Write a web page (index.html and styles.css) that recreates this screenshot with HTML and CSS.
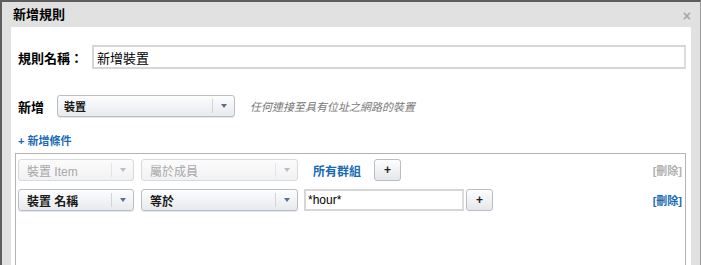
FILE: index.html
```html
<!DOCTYPE html>
<html>
<head>
<meta charset="utf-8">
<link rel="stylesheet" href="styles.css">
</head>
<body>
<div class="dialog">
  <div class="titlebar">
    <span class="title">新增規則</span>
    <span class="close">×</span>
  </div>
  <div class="content">
    <div class="name-row">
      <span class="label">規則名稱：</span>
      <input class="text name-input" type="text" value="新增裝置">
    </div>
    <div class="add-row">
      <span class="label add-label">新增</span>
      <div class="select sel-type"><span class="sel-text">裝置</span><span class="sel-arrow"></span></div>
      <span class="hint">任何連接至具有位址之網路的裝置</span>
    </div>
    <a class="add-cond">+ 新增條件</a>
    <div class="cond-box">
      <div class="cond-row">
        <div class="select sel-a disabled"><span class="sel-text">裝置 Item</span><span class="sel-arrow"></span></div>
        <div class="select sel-b disabled"><span class="sel-text">屬於成員</span><span class="sel-arrow"></span></div>
        <a class="group-link">所有群組</a>
        <button class="plus btn-group">+</button>
        <span class="del disabled-del">[刪除]</span>
      </div>
      <div class="cond-row">
        <div class="select sel-a"><span class="sel-text">裝置 名稱</span><span class="sel-arrow"></span></div>
        <div class="select sel-b"><span class="sel-text">等於</span><span class="sel-arrow"></span></div>
        <input class="text val-input" type="text" value="*hour*">
        <button class="plus">+</button>
        <span class="del">[刪除]</span>
      </div>
    </div>
  </div>
</div>
</body>
</html>
```
FILE: styles.css
```css
* { box-sizing: border-box; }
html, body { margin: 0; padding: 0; }
html { overflow: hidden; width: 701px; height: 265px; }
body {
  width: 701px;
  height: 265px;
  font-family: "Liberation Sans", "Noto Sans CJK TC", sans-serif;
  font-size: 12px;
  color: #000;
}
.dialog {
  width: 701px;
  height: 265px;
  background: #e1e1e1;
  border-top: 2px solid #5e5e5e;
  border-left: 2px solid #5e5e5e;
  border-right: 1px solid #9a9a9a;
  display: flex;
  flex-direction: column;
  overflow: hidden;
}
.titlebar {
  height: 25px;
  display: flex;
  align-items: center;
  justify-content: space-between;
  padding: 0 9px 0 11px;
  flex-shrink: 0;
}
.title {
  font-weight: bold;
  font-size: 13px;
  margin-top: -2px;
}
.close {
  color: #a8a8a8;
  font-size: 14px;
  font-weight: bold;
  margin-top: 2px;
}
.content {
  background: #fff;
  margin: 0 9px 0 9px;
  flex: 1;
  min-height: 0;
  overflow: hidden;
  padding: 18px 5px 0 7px;
}
.label {
  font-weight: bold;
  font-size: 13px;
  flex: none;
}
.name-row {
  display: flex;
  align-items: center;
  height: 24px;
}
.name-row .label { width: 74px; }
.text {
  font-family: "Liberation Sans", "Noto Sans CJK TC", sans-serif;
  font-size: 12px;
  border: 2px solid #d6d6d6;
  border-right-color: #dcdcdc;
  padding: 0 3px;
  background: #fff;
  color: #000;
  outline: none;
}
.name-input {
  flex: 1;
  height: 24px;
  font-size: 13px;
}
.add-row {
  display: flex;
  align-items: center;
  margin-top: 26px;
  height: 22px;
}
.add-label { margin-right: 13px; }
.select {
  flex: none;
  height: 22px;
  border: 1px solid #b9bdc4;
  border-radius: 3px;
  background: linear-gradient(#fdfdfe, #e7eaee);
  display: flex;
  align-items: center;
  position: relative;
  box-shadow: 0 1px 0 #e4e6ea;
}
.sel-text {
  flex: 1;
  padding-left: 8px;
  font-size: 12px;
  font-weight: bold;
  color: #1a1a1a;
  white-space: nowrap;
}
.sel-arrow {
  flex: none;
  width: 22px;
  height: 14px;
  border-left: 1px solid #d0d3d8;
  position: relative;
}
.sel-arrow::after {
  content: "";
  position: absolute;
  left: 8px;
  top: 5px;
  border-left: 3px solid transparent;
  border-right: 3px solid transparent;
  border-top: 4px solid #5b6f8f;
}
.sel-type { width: 178px; }
.sel-type .sel-text { padding-left: 6px; font-size: 11px; }
.hint {
  flex: none;
  margin-left: 15px;
  font-style: italic;
  color: #777;
  font-size: 11px;
}
.add-cond {
  display: block;
  margin-top: 17px;
  color: #1a6bb5;
  font-weight: bold;
  font-size: 11px;
  height: 14px;
  line-height: 14px;
}
.cond-box {
  margin-top: 5px;
  margin-left: -3px;
  border: 1px solid #b4b4b4;
  height: 130px;
  padding: 5px 2px 0 2px;
}
.cond-row {
  display: flex;
  align-items: center;
  height: 22px;
  margin-bottom: 8px;
}
.sel-a { width: 116px; }
.sel-b { width: 157px; margin-left: 7px; }
.disabled { background: linear-gradient(#fcfcfc, #f1f2f4); border-color: #d8dade; box-shadow: none; }
.disabled .sel-text { color: #a8a8a8; font-weight: normal; }
.disabled .sel-arrow { border-left-color: #e2e4e7; }
.disabled .sel-arrow::after { border-top-color: #b9bec8; }
.group-link {
  color: #1a6bb5;
  font-weight: bold;
  font-size: 12px;
  margin-left: 15px;
}
.plus {
  flex: none;
  width: 27px;
  height: 22px;
  border: 1px solid #b9bdc4;
  border-radius: 3px;
  background: linear-gradient(#fdfdfe, #e4e7eb);
  font-size: 12px;
  font-weight: bold;
  padding: 0;
  color: #222;
  font-family: "Liberation Sans", sans-serif;
}
.btn-group { margin-left: 13px; }
.val-input {
  flex: none;
  width: 160px;
  height: 22px;
  margin-left: 6px;
  padding-left: 2px;
}
.cond-row .val-input + .plus { margin-left: 2px; }
.del {
  margin-left: auto;
  margin-right: 1px;
  color: #1a6bb5;
  font-weight: bold;
  font-size: 11px;
}
.disabled-del { color: #b0b0b0; }
```
